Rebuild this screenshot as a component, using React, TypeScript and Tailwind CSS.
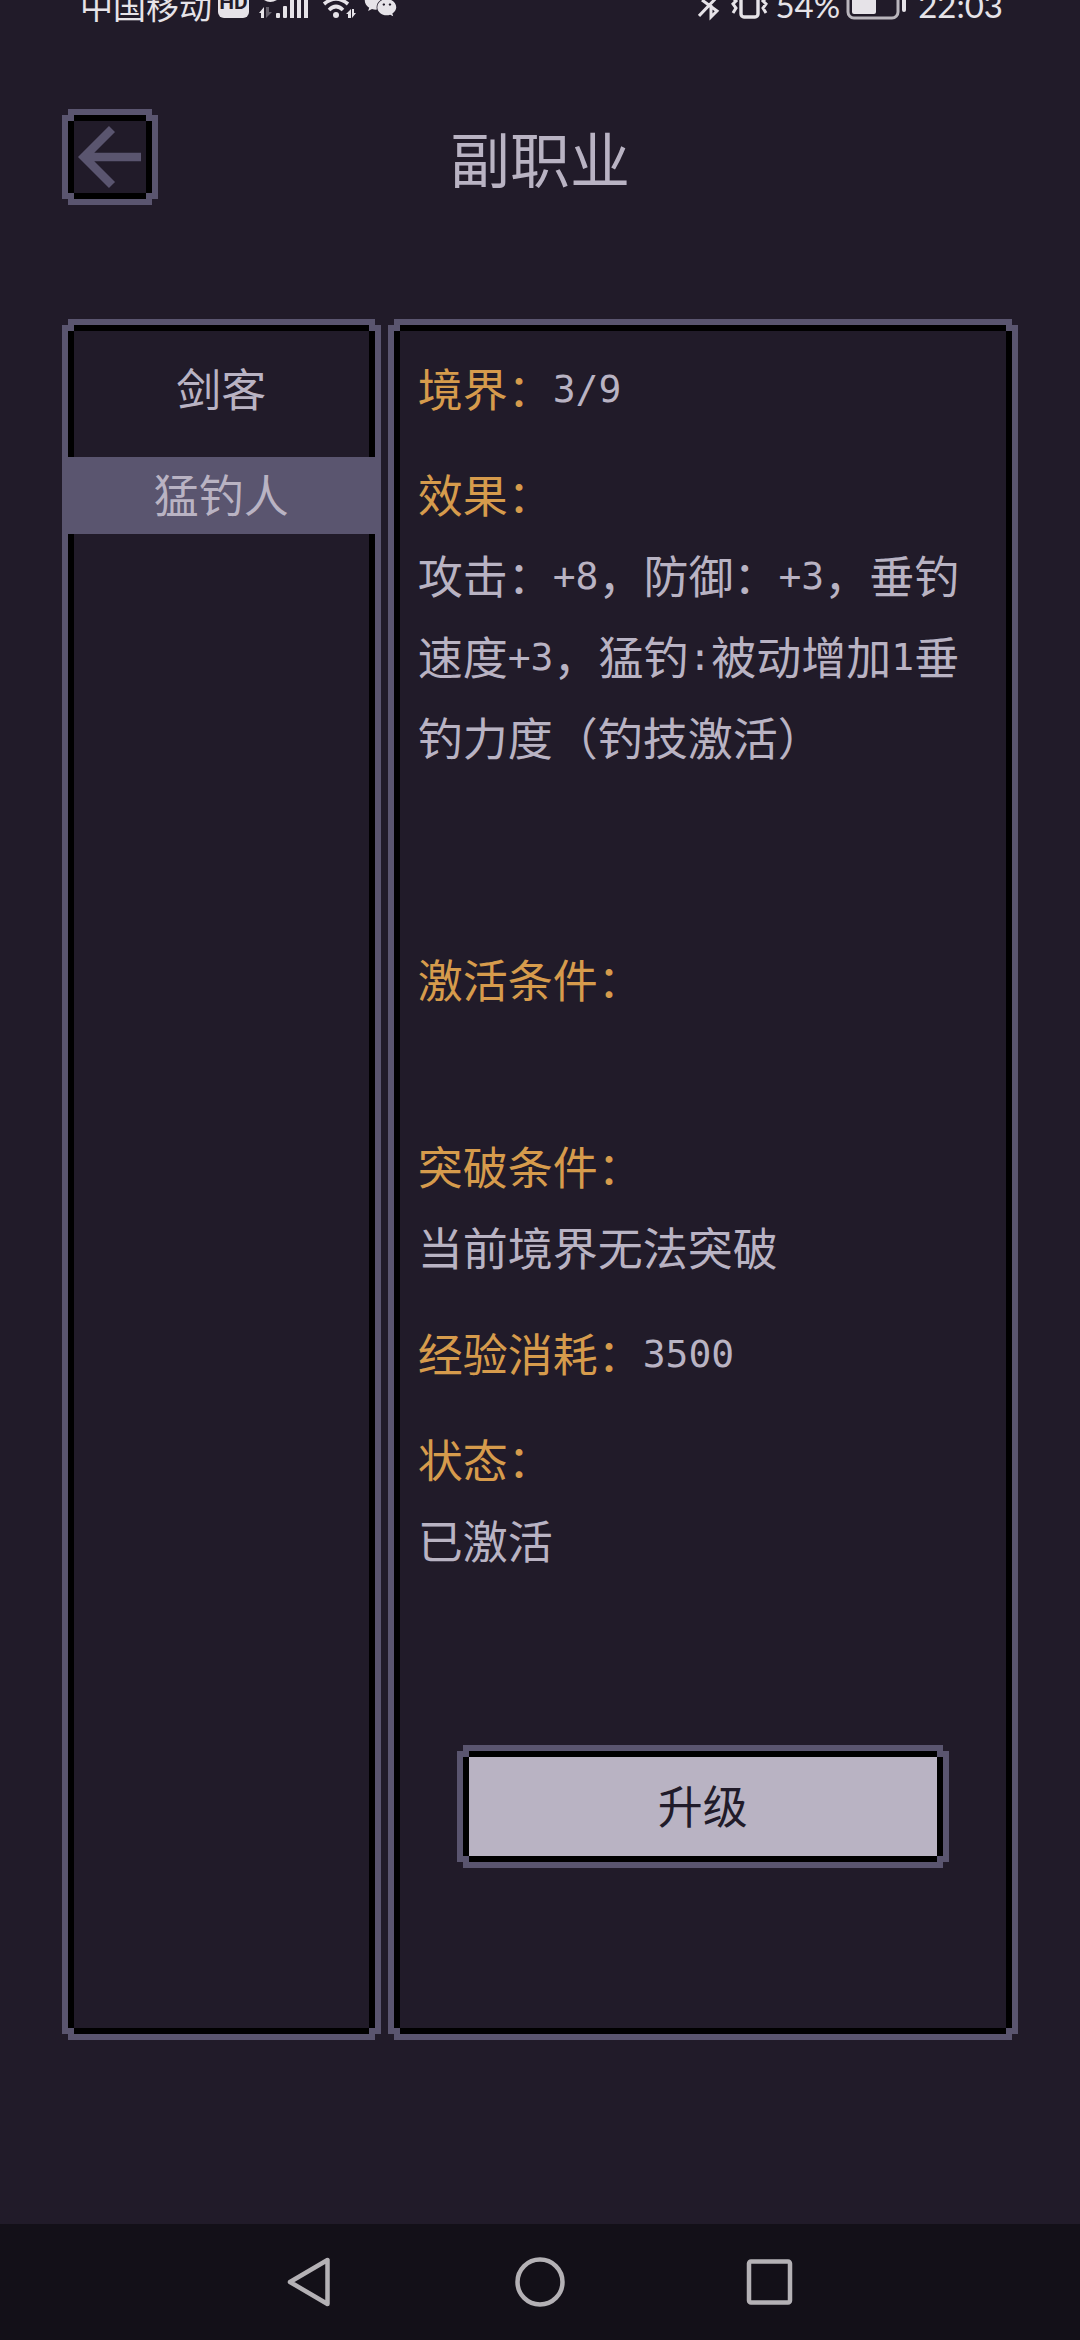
import type { ReactNode } from "react";
import { FaWeixin } from "react-icons/fa";

const JOBS = [
  { key: "swordsman", name: "剑客" },
  { key: "angler", name: "猛钓人" },
];

const ACTIVE_JOB = "angler";

// Notched pixel border: purple outside, black inside, purple corner pixels.
function PixelFrame({ className = "", children }: { className?: string; children: ReactNode }) {
  return (
    <div className={`flex p-[6px] ${className}`}>
      <div className="flex flex-1 bg-[#5a556f] p-[6px] shadow-[0_-6px_#5a556f,0_6px_#5a556f,-6px_0_#5a556f,6px_0_#5a556f]">
        {children}
      </div>
    </div>
  );
}

const INNER = "shadow-[0_-6px_#000,0_6px_#000,-6px_0_#000,6px_0_#000]";

function Num({ children }: { children: ReactNode }) {
  return (
    <span className="align-[5px] font-['DejaVu_Sans_Mono',monospace] text-[38px] leading-none">{children}</span>
  );
}

function Label({ children }: { children: ReactNode }) {
  return <span className="text-[#d69b4c]">{children}</span>;
}

function StatusBar() {
  return (
    <div className="flex h-[30px] items-end justify-between overflow-hidden pr-[77px] pl-[80px] text-[33px] leading-[50px] text-[#e6e3e8]">
      <div className="flex items-end">
        <span>中国移动</span>
        <span className="mb-[12px] ml-[6px] h-[30px] w-[31px] rounded-md bg-[#e6e3e8] text-center font-['Roboto',sans-serif] text-[21px] leading-[28px] font-bold text-[#211b29]">
          HD
        </span>
        <svg className="h-[30px] w-[150px]" viewBox="0 0 150 30" fill="currentColor">
          <path d="M10 13L15 7V18H12V13Z" />
          <path d="M17 7V18L23 12H20V7Z" opacity="0.35" />
          <path d="M15 -3H28V0Q21 4 15 0Z" />
          <rect x="27" y="13" width="4" height="5" rx="1" />
          <rect x="34" y="6" width="4" height="12" rx="1" />
          <rect x="41" y="0" width="4" height="18" />
          <rect x="48" y="-6" width="4" height="24" />
          <rect x="55" y="-12" width="4" height="30" />
          <circle cx="87" cy="15" r="3" />
          <g fill="none" stroke="currentColor" strokeWidth="3.6">
            <path d="M75 4Q87 -6 99 4" />
            <path d="M80 10Q87 3 94 10" />
          </g>
          <path d="M97 14L102 9V18H99V14Z" />
          <path d="M103 9V18L107 13H105V9Z" />
          <FaWeixin x="115" y="-13" width="32" height="31" />
        </svg>
      </div>
      <div className="flex items-end font-['Lato',sans-serif]">
        <svg className="mr-[5px] h-[30px] w-[72px]" viewBox="0 0 72 30" fill="none" stroke="currentColor" strokeWidth="3">
          <path d="M1 16L20 -4M4 0L19 11L13 17V5" />
          <rect x="43" y="-16" width="17" height="33" rx="3" strokeWidth="3.4" />
          <path d="M34 -3L38 1L35 4L38 8L35 13M69 -3L65 1L68 4L65 8L68 13" />
        </svg>
        <span>54%</span>
        <svg className="mr-[10px] ml-[6px] h-[30px] w-[62px]" viewBox="0 0 62 30">
          <rect x="2" y="-14" width="50" height="32" rx="6" fill="none" stroke="#b9b5bc" strokeWidth="3" />
          <rect x="6" y="-10" width="24" height="24" rx="2" fill="#e6e3e8" />
          <rect x="56" y="-8" width="4" height="20" rx="2" fill="#e6e3e8" />
        </svg>
        <span>22:03</span>
      </div>
    </div>
  );
}

function SystemNav() {
  return (
    <nav className="flex h-[116px] items-center justify-center gap-[180px] bg-[#131018] text-[#b4b1b5]">
      <button aria-label="Back">
        <svg className="size-[50px]" viewBox="0 0 50 50" fill="none" stroke="currentColor" strokeWidth="4.5" strokeLinejoin="round">
          <path d="M42.5 3V47L5 25Z" />
        </svg>
      </button>
      <button aria-label="Home">
        <svg className="size-[50px]" viewBox="0 0 50 50" fill="none" stroke="currentColor" strokeWidth="4.5">
          <circle cx="25" cy="25" r="22.5" />
        </svg>
      </button>
      <button aria-label="Recent apps">
        <svg className="size-[50px]" viewBox="0 0 50 50" fill="none" stroke="currentColor" strokeWidth="4.5">
          <rect x="4" y="4.5" width="41" height="41" rx="2" />
        </svg>
      </button>
    </nav>
  );
}

export default function App() {
  return (
    <div className="flex min-h-screen flex-col bg-[#211b29] font-['Noto_Sans_CJK_SC',sans-serif] text-[#b9b3c3]">
      <StatusBar />

      <header className="mt-[79px] grid grid-cols-[1fr_auto_1fr] items-center px-[62px]">
        <button aria-label="返回" className="justify-self-start">
          <PixelFrame>
            <span className={`block bg-[#211b29] ${INNER}`}>
              <svg className="size-[72px]" viewBox="0 0 72 72" fill="none" stroke="#5a556f" strokeWidth="8.5">
                <path d="M38 8L10 36L38 64M10 36H67" />
              </svg>
            </span>
          </PixelFrame>
        </button>
        <h1 className="text-[60px] leading-[92px]">副职业</h1>
      </header>

      <main className="mt-[114px] mb-[184px] flex flex-1 gap-[7px] px-[62px] text-[45px]">
        <PixelFrame className="w-1/3">
          <div className={`flex flex-1 flex-col gap-[29px] bg-[#211b29] pt-[20px] ${INNER}`}>
            {JOBS.map((job) => (
              <button
                key={job.key}
                className={`-mx-[6px] h-[77px] pb-1 leading-[68px] ${job.key === ACTIVE_JOB ? "bg-[#5a556f]" : ""}`}
              >
                {job.name}
              </button>
            ))}
          </div>
        </PixelFrame>

        <PixelFrame className="flex-1">
          <div className={`flex flex-1 flex-col gap-[25px] bg-[#211b29] px-[18px] pt-[16px] leading-[81px] ${INNER}`}>
            <p>
              <Label>境界：</Label>
              <Num>3/9</Num>
            </p>
            <section>
              <h2><Label>效果：</Label></h2>
              <p className="min-h-[379px]">
                攻击：<Num>+8</Num>，防御：<Num>+3</Num>，垂钓速度<Num>+3</Num>，猛钓<Num>:</Num>被动增加<Num>1</Num>垂钓力度（钓技激活）
              </p>
            </section>
            <section>
              <h2><Label>激活条件：</Label></h2>
              <p className="min-h-[81px]"></p>
            </section>
            <section>
              <h2><Label>突破条件：</Label></h2>
              <p>当前境界无法突破</p>
            </section>
            <p>
              <Label>经验消耗：</Label>
              <Num>3500</Num>
            </p>
            <section>
              <h2><Label>状态：</Label></h2>
              <p>已激活</p>
            </section>
            <button className="mx-[39px] mt-[140px]">
              <PixelFrame>
                <span className={`flex-1 bg-[#b9b3c3] pb-1 leading-[95px] text-[#211b29] ${INNER}`}>升级</span>
              </PixelFrame>
            </button>
          </div>
        </PixelFrame>
      </main>

      <SystemNav />
    </div>
  );
}
